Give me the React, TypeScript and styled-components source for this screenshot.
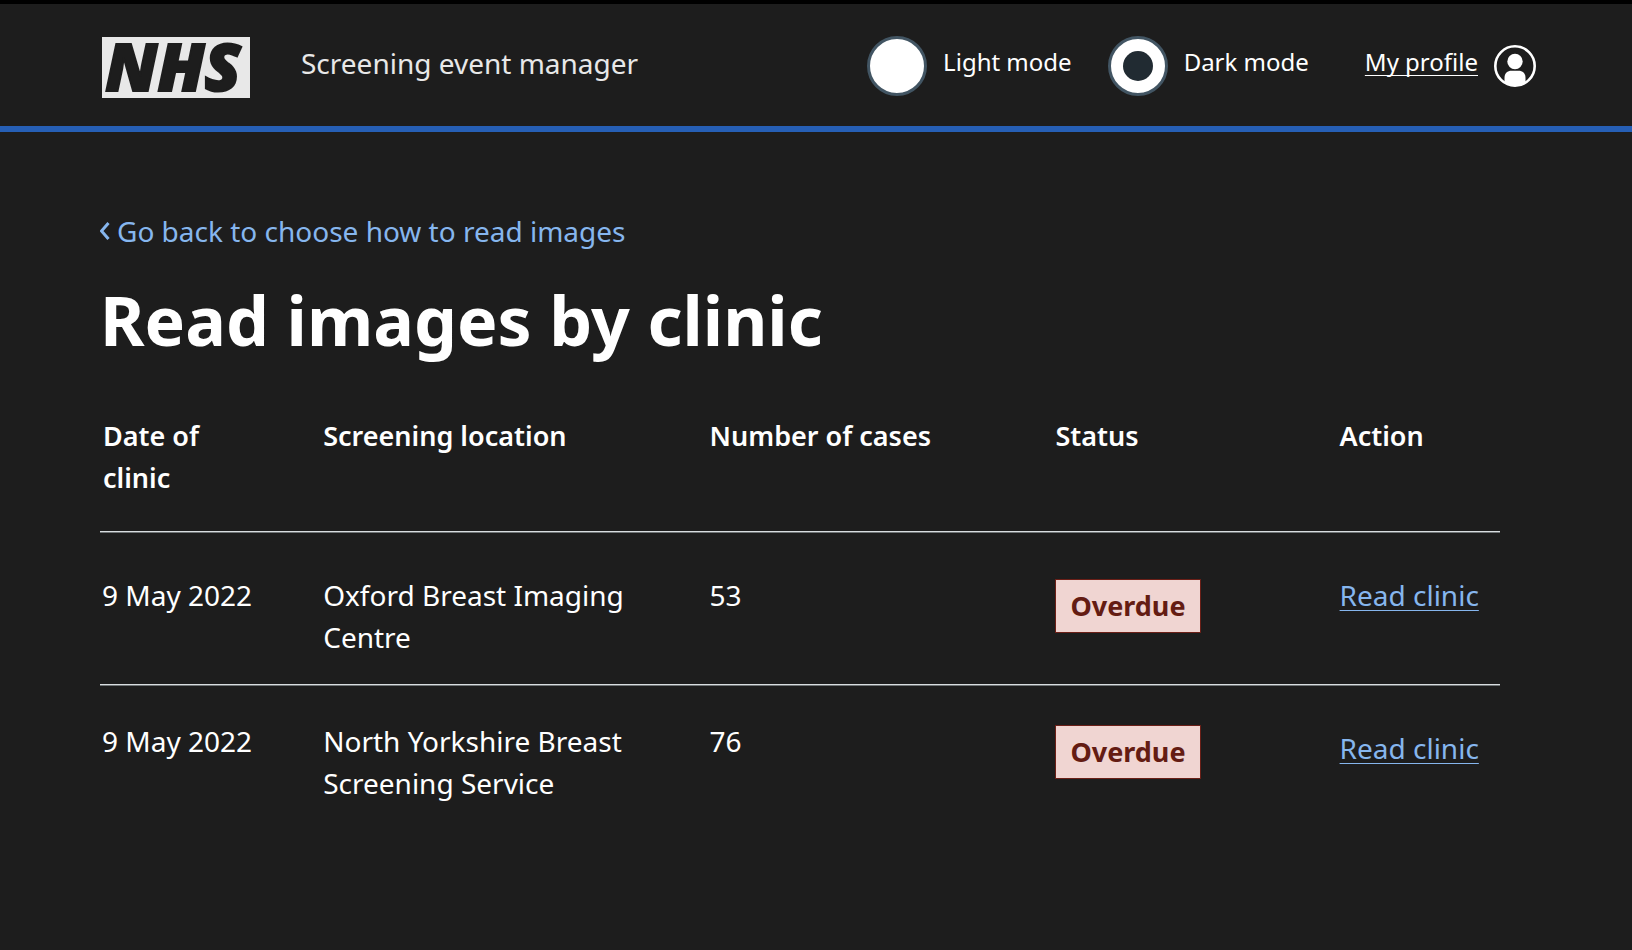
import React from "react";
import styled, { createGlobalStyle } from "styled-components";

const GlobalStyle = createGlobalStyle`
  *, *::before, *::after { box-sizing: border-box; }
  body {
    margin: 0;
    background: #1d1d1d;
    color: #ffffff;
    font-family: "Noto Sans", "Open Sans", sans-serif;
    font-size: 28px;
    line-height: 42px;
  }
`;

const Header = styled.header`
  display: flex;
  align-items: center;
  min-height: 132px;
  padding: 2px 96px 0 102px;
  border-top: 4px solid #000000;
  border-bottom: 6px solid #265fb5;
`;

const Logo = styled.div`
  display: flex;
  flex: none;
  align-items: center;
  justify-content: center;
  width: 148px;
  height: 61px;
  margin-top: 2px;
  padding: 0 6px 4px 0;
  background: #e8e8e8;
  color: #1d1d1d;
  font-size: 66px;
  line-height: 61px;
  font-weight: 900;
  font-style: italic;
  -webkit-text-stroke: 2px #1d1d1d;
`;

const ServiceName = styled.span`
  margin-left: 51px;
  padding-bottom: 6px;
  color: #e8e8e8;
`;

const Tools = styled.div`
  display: flex;
  align-items: center;
  margin-left: auto;
  font-size: 24px;
  line-height: 36px;
`;

const Modes = styled.fieldset`
  display: flex;
  gap: 36px;
  margin: 0;
  padding: 0;
  border: 0;
`;

const Mode = styled.label`
  display: flex;
  align-items: center;
  gap: 16px;
  cursor: pointer;
`;

const LabelText = styled.span`
  padding-bottom: 8px;
`;

const Radio = styled.input`
  appearance: none;
  display: grid;
  place-items: center;
  width: 60px;
  height: 60px;
  margin: 0;
  border: 3px solid #425563;
  border-radius: 50%;
  background: #ffffff;

  &:checked::before {
    content: "";
    width: 30px;
    height: 30px;
    border-radius: 50%;
    background: #212b32;
  }
`;

const ProfileLink = styled.a`
  display: flex;
  align-items: center;
  gap: 16px;
  margin-left: 56px;
  color: #ffffff;
  text-decoration-thickness: 1px;
  text-underline-offset: 4px;
  text-decoration-skip-ink: none;
`;

const ProfileIcon = styled.svg`
  display: block;
  width: 42px;
  height: 42px;
`;

const Main = styled.main`
  padding: 77px 132px 80px 100px;
`;

const BackLink = styled.a`
  display: inline-flex;
  align-items: center;
  gap: 6px;
  color: #86b6ee;
  text-decoration: none;
`;

const Chevron = styled.svg`
  display: block;
  width: 11px;
  height: 20px;
`;

const Title = styled.h1`
  margin: 20px 0 47px;
  font-size: 68px;
  line-height: 96px;
  font-weight: 700;
`;

const Table = styled.table`
  width: 100%;
  table-layout: fixed;
  border-collapse: separate;
  border-spacing: 0;
`;

const Column = styled.col<{ $share?: number }>`
  width: ${(p) => (p.$share ? `${p.$share}%` : "auto")};
`;

const HeadCell = styled.th`
  padding: 0 60px 32px 3px;
  font-size: 27px;
  font-weight: 600;
  text-align: left;
  vertical-align: top;
  border-bottom: 1px solid #d8dde0;
  box-shadow: 0 1px #6f7476;

  &:nth-child(n + 2) {
    padding-right: 0;
    padding-left: 2px;
  }
`;

const Cell = styled.td`
  padding: 42px 0 26px 2px;
  vertical-align: top;

  tr:not(:last-child) > & {
    border-bottom: 1px solid #d8dde0;
    box-shadow: 0 1px #6f7476;
  }

  tr:last-child > & {
    padding-top: 35px;
  }

  tr:last-child > &:last-child {
    padding-top: 42px;
  }
`;

const Tag = styled.strong`
  display: block;
  width: fit-content;
  margin-top: 5px;
  padding: 5px 14px;
  border: 1px solid #6b1f17;
  background: #f0d5d2;
  color: #641c13;
  font-size: 27px;
  font-weight: 700;
`;

const ActionLink = styled.a`
  color: #86b6ee;
  text-decoration-thickness: 1px;
  text-underline-offset: 4px;
`;

const clinics = [
  { id: 1, date: "9 May 2022", location: "Oxford Breast Imaging Centre", cases: 53 },
  { id: 2, date: "9 May 2022", location: "North Yorkshire Breast Screening Service", cases: 76 },
];

export default function App() {
  return (
    <>
      <GlobalStyle />
      <Header>
        <Logo>NHS</Logo>
        <ServiceName>Screening event manager</ServiceName>
        <Tools>
          <Modes aria-label="Display mode">
            <Mode>
              <Radio type="radio" name="mode" value="light" />
              <LabelText>Light mode</LabelText>
            </Mode>
            <Mode>
              <Radio type="radio" name="mode" value="dark" defaultChecked />
              <LabelText>Dark mode</LabelText>
            </Mode>
          </Modes>
          <ProfileLink href="#profile">
            <LabelText>My profile</LabelText>
            <ProfileIcon viewBox="0 0 42 42" aria-hidden="true">
              <circle cx="21" cy="21" r="19.7" fill="none" stroke="#fff" strokeWidth="2.6" />
              <circle cx="21" cy="16.5" r="7.7" fill="#fff" />
              <path d="M10.500 38V33c0-5 3-7.200 7-7.200h7c4 0 7 2.200 7 7.200v5A20 20 0 0 1 10.500 38Z" fill="#fff" />
            </ProfileIcon>
          </ProfileLink>
        </Tools>
      </Header>
      <Main>
        <BackLink href="#back">
          <Chevron viewBox="0 0 11 20" aria-hidden="true">
            <path d="M8.500 2 1.500 10l7 8" fill="none" stroke="currentColor" strokeWidth="3" />
          </Chevron>
          Go back to choose how to read images
        </BackLink>
        <Title>Read images by clinic</Title>
        <Table>
          <colgroup>
            <Column $share={15.8} />
            <Column $share={27.6} />
            <Column $share={24.7} />
            <Column $share={20.3} />
            <Column />
          </colgroup>
          <thead>
            <tr>
              <HeadCell scope="col">Date of clinic</HeadCell>
              <HeadCell scope="col">Screening location</HeadCell>
              <HeadCell scope="col">Number of cases</HeadCell>
              <HeadCell scope="col">Status</HeadCell>
              <HeadCell scope="col">Action</HeadCell>
            </tr>
          </thead>
          <tbody>
            {clinics.map((clinic) => (
              <tr key={clinic.id}>
                <Cell>{clinic.date}</Cell>
                <Cell>{clinic.location}</Cell>
                <Cell>{clinic.cases}</Cell>
                <Cell>
                  <Tag>Overdue</Tag>
                </Cell>
                <Cell>
                  <ActionLink href={`#clinic-${clinic.id}`}>Read clinic</ActionLink>
                </Cell>
              </tr>
            ))}
          </tbody>
        </Table>
      </Main>
    </>
  );
}
